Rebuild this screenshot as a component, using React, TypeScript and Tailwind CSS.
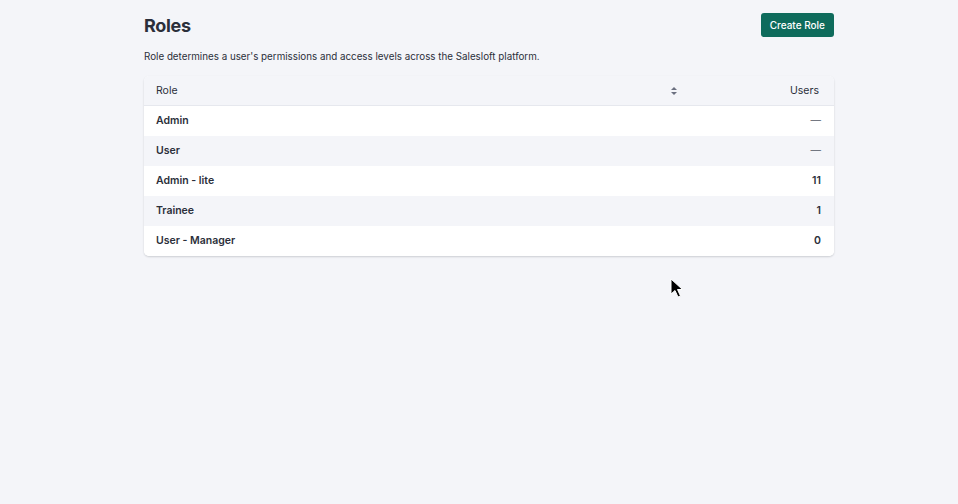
const roles = [
  { name: "Admin", users: "—" },
  { name: "User", users: "—" },
  { name: "Admin - lite", users: "11" },
  { name: "Trainee", users: "1" },
  { name: "User - Manager", users: "0" },
];

const SortIcon = () => (
  <svg width="8" height="10" viewBox="0 0 8 10" className="text-[#6b7080]">
    <path d="M4 1 L7 4 H1 Z" fill="currentColor" />
    <path d="M4 9 L7 6 H1 Z" fill="currentColor" />
  </svg>
);

const Cursor = () => (
  <svg width="14" height="20" viewBox="0 0 14 20" className="absolute left-[670px] top-[278px]">
    <path d="M1 1 L1 16 L5 12.5 L8 19 L10.5 18 L7.5 11.5 L12.5 11.5 Z" fill="#000" stroke="#fff" strokeWidth="1" />
  </svg>
);

export default function App() {
  return (
    <div className="relative min-h-screen w-full bg-[#f4f5f9] font-['Inter',sans-serif] text-[#2b2f3a]">
      <div className="ml-[144px] w-[690px] pt-[13px]">
        <div className="flex items-start justify-between">
          <h1 className="pt-[3px] text-[18px] font-bold leading-[20px] tracking-[-0.3px] text-[#2b2f3a]">Roles</h1>
          <button className="h-6 rounded-[3px] bg-[#0e6b5c] px-[9px] text-[10px] font-medium text-white">
            Create Role
          </button>
        </div>
        <p className="mt-[13px] text-[9.8px] leading-[14px] text-[#2b2f3a]">
          Role determines a user's permissions and access levels across the Salesloft platform.
        </p>
        <div className="mt-[12px] overflow-hidden rounded-[5px] bg-white shadow-[0_1px_2px_rgba(20,25,40,0.18)]">
          <div className="flex h-[30px] items-center border-b border-[#e6e8ee] bg-[#f4f5f9] text-[10.5px] text-[#2b2f3a]">
            <div className="flex flex-1 items-center justify-between pl-3 pr-[8px]">
              <span>Role</span>
              <SortIcon />
            </div>
            <div className="w-[148px] pr-[15px] text-right">Users</div>
          </div>
          {roles.map((r, i) => (
            <div
              key={r.name}
              className={`flex h-[30px] items-center text-[10.5px] font-semibold ${i % 2 === 1 ? "bg-[#f4f5f9]" : "bg-white"}`}
            >
              <div className="flex-1 pl-3">{r.name}</div>
              <div className={`w-[148px] pr-[13px] text-right ${r.users === "—" ? "font-normal text-[#555a66]" : ""}`}>
                {r.users}
              </div>
            </div>
          ))}
        </div>
      </div>
      <Cursor />
    </div>
  );
}
